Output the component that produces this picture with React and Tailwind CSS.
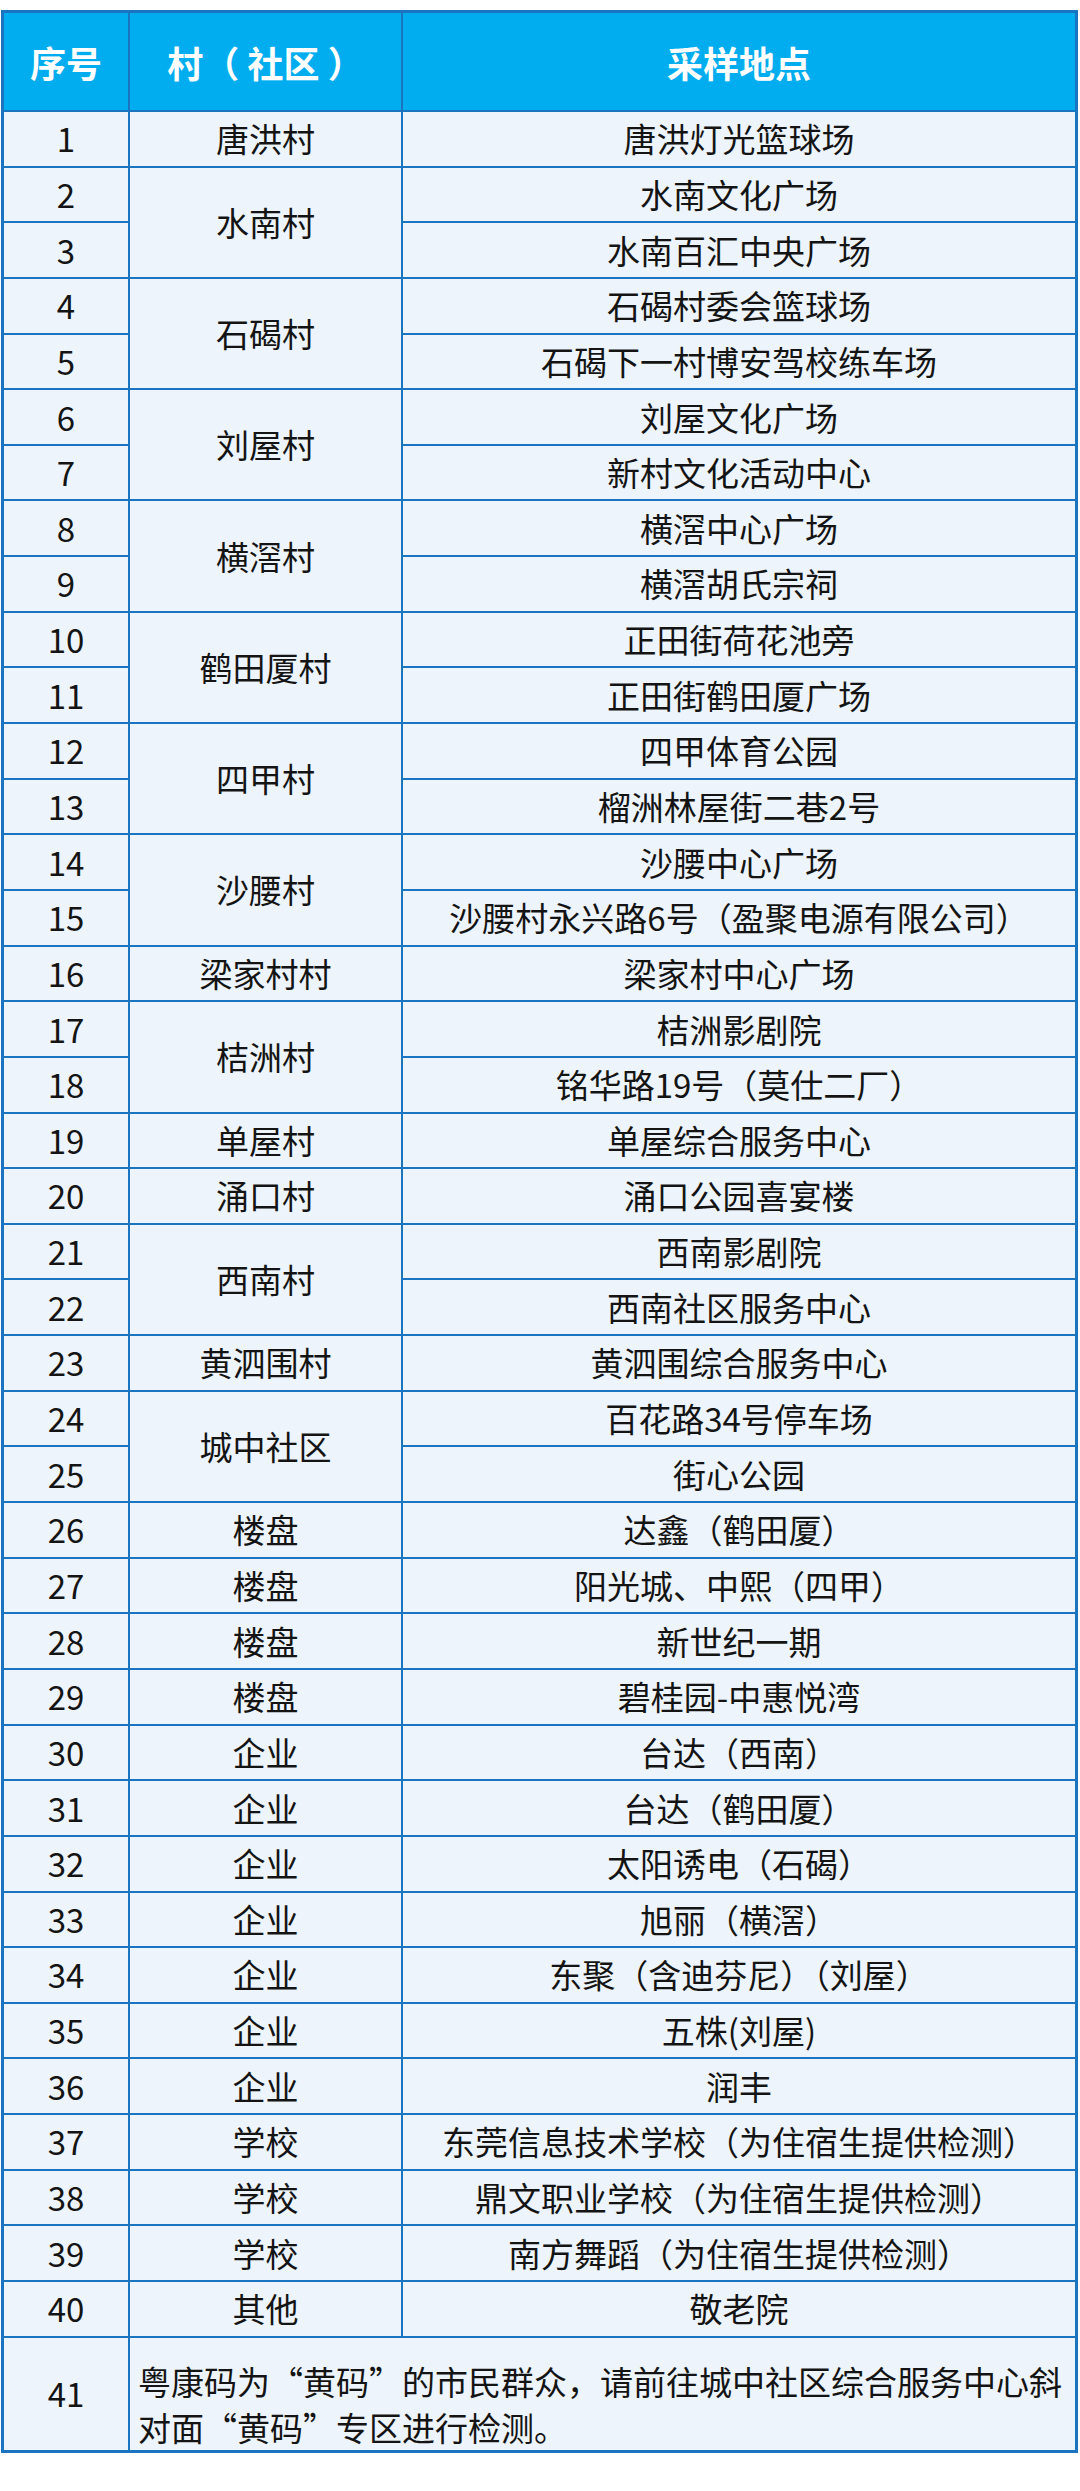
const groups = [
  { name: '唐洪村', sites: ['唐洪灯光篮球场'] },
  { name: '水南村', sites: ['水南文化广场', '水南百汇中央广场'] },
  { name: '石碣村', sites: ['石碣村委会篮球场', '石碣下一村博安驾校练车场'] },
  { name: '刘屋村', sites: ['刘屋文化广场', '新村文化活动中心'] },
  { name: '横滘村', sites: ['横滘中心广场', '横滘胡氏宗祠'] },
  { name: '鹤田厦村', sites: ['正田街荷花池旁', '正田街鹤田厦广场'] },
  { name: '四甲村', sites: ['四甲体育公园', '榴洲林屋街二巷2号'] },
  { name: '沙腰村', sites: ['沙腰中心广场', '沙腰村永兴路6号（盈聚电源有限公司）'] },
  { name: '梁家村村', sites: ['梁家村中心广场'] },
  { name: '桔洲村', sites: ['桔洲影剧院', '铭华路19号（莫仕二厂）'] },
  { name: '单屋村', sites: ['单屋综合服务中心'] },
  { name: '涌口村', sites: ['涌口公园喜宴楼'] },
  { name: '西南村', sites: ['西南影剧院', '西南社区服务中心'] },
  { name: '黄泗围村', sites: ['黄泗围综合服务中心'] },
  { name: '城中社区', sites: ['百花路34号停车场', '街心公园'] },
  { name: '楼盘', sites: ['达鑫（鹤田厦）'] },
  { name: '楼盘', sites: ['阳光城、中熙（四甲）'] },
  { name: '楼盘', sites: ['新世纪一期'] },
  { name: '楼盘', sites: ['碧桂园-中惠悦湾'] },
  { name: '企业', sites: ['台达（西南）'] },
  { name: '企业', sites: ['台达（鹤田厦）'] },
  { name: '企业', sites: ['太阳诱电（石碣）'] },
  { name: '企业', sites: ['旭丽（横滘）'] },
  { name: '企业', sites: ['东聚（含迪芬尼）（刘屋）'] },
  { name: '企业', sites: ['五株(刘屋)'] },
  { name: '企业', sites: ['润丰'] },
  { name: '学校', sites: ['东莞信息技术学校（为住宿生提供检测）'] },
  { name: '学校', sites: ['鼎文职业学校（为住宿生提供检测）'] },
  { name: '学校', sites: ['南方舞蹈（为住宿生提供检测）'] },
  { name: '其他', sites: ['敬老院'] },
]

const cell = 'flex items-center justify-center bg-[#eef4fc] whitespace-nowrap'
const head = 'flex items-center justify-center bg-[#01adef] text-[36px] font-bold text-white whitespace-pre'

export default function App() {
  let n = 0
  const cells = []
  groups.forEach((g, gi) => {
    g.sites.forEach((site, si) => {
      n += 1
      cells.push(
        <div key={`n${n}`} className={cell} style={{ gridColumn: 1, gridRow: n + 1 }}>
          {n}
        </div>
      )
      if (si === 0) {
        cells.push(
          <div
            key={`g${gi}`}
            className={cell}
            style={{ gridColumn: 2, gridRow: `${n + 1} / span ${g.sites.length}` }}
          >
            {g.name}
          </div>
        )
      }
      cells.push(
        <div key={`s${n}`} className={cell} style={{ gridColumn: 3, gridRow: n + 1 }}>
          {site}
        </div>
      )
    })
  })

  return (
    <div className="min-h-[2491px] bg-white pt-[10px] pl-[1px] font-['Noto_Sans_CJK_SC','Noto_Sans',sans-serif]">
      <div className="grid w-[1077px] grid-cols-[124px_271px_1fr] grid-rows-[97px_repeat(40,53.65px)_112px] gap-[2px] bg-[#1b74bf] p-[3px] text-[33px] leading-none text-[#141414]">
        <div className={head}>序号</div>
        <div className={head}>{'村（ 社区 ）'}</div>
        <div className={head}>采样地点</div>
        {cells}
        <div className={cell} style={{ gridColumn: 1, gridRow: 42 }}>
          41
        </div>
        <div className="col-span-2 bg-[#eef4fc] pl-[8px] pt-[20px] leading-[46px] whitespace-nowrap" style={{ gridRow: 42 }}>
          粤康码为“黄码”的市民群众，请前往城中社区综合服务中心斜
          <br />
          对面“黄码”专区进行检测。
        </div>
      </div>
    </div>
  )
}
